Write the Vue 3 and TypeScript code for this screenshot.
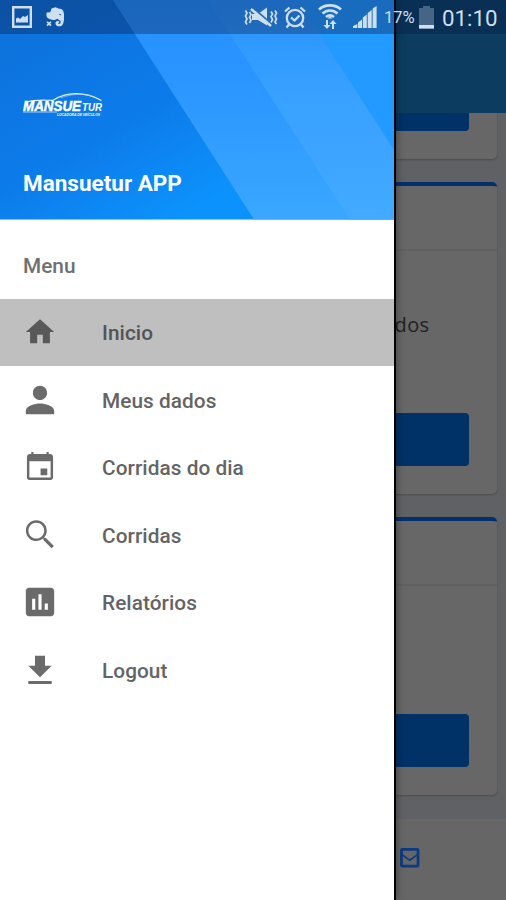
<script setup lang="ts">
interface MenuItem {
  label: string
  path: string
  box: string
  active?: boolean
}

const items: MenuItem[] = [
  { label: 'Inicio', box: '0 0 24 24', path: 'M10 20v-6h4v6h5v-8h3L12 3 2 12h3v8z', active: true },
  {
    label: 'Meus dados',
    box: '0 0 24 24',
    path: 'M12 12c2.76 0 5-2.24 5-5s-2.24-5-5-5-5 2.24-5 5 2.24 5 5 5zm0 2.5c-3.34 0-10 1.68-10 5V22h20v-2.5c0-3.32-6.66-5-10-5z',
  },
  {
    label: 'Corridas do dia',
    box: '0.3 0.3 23.4 23.4',
    path: 'M17 13h-4.6v4.6H17V13zM16.5 1.7V3h-9V1.7H6V3H5c-1.11 0-1.99.9-1.99 2L3 19c0 1.1.89 2 2 2h14c1.1 0 2-.9 2-2V5c0-1.1-.9-2-2-2h-1V1.7h-1.5zM19.3 19.3H4.7V8h14.6v11.3z',
  },
  {
    label: 'Corridas',
    box: '1.2 1.6 21.2 21.2',
    path: 'M15.5 14h-.79l-.28-.27C15.41 12.59 16 11.11 16 9.5 16 5.91 13.09 3 9.5 3S3 5.91 3 9.5 5.91 16 9.5 16c1.61 0 3.09-.59 4.23-1.57l.27.28v.79l5 4.99L20.49 19l-4.99-5zm-6 0.4C6.8 14.4 4.6 12.2 4.6 9.5S6.8 4.6 9.5 4.6 14.4 6.8 14.4 9.5 12.2 14.4 9.5 14.4z',
  },
  {
    label: 'Relatórios',
    box: '1.2 1.2 21.6 21.6',
    path: 'M19 3H5c-1.1 0-2 .9-2 2v14c0 1.1.9 2 2 2h14c1.1 0 2-.9 2-2V5c0-1.1-.9-2-2-2zM9 17H7v-7h2v7zm4 0h-2V7h2v10zm4 0h-2v-4h2v4z',
  },
  { label: 'Logout', box: '1.8 1.4 20.4 20.4', path: 'M19 9h-4V3H9v6H5l7 7 7-7zM5 18.2v1.8h14v-1.8H5z' },
]
</script>

<template>
  <div class="phone">
    <main class="page">
      <header class="toolbar"></header>
      <section class="card first">
        <div class="button"></div>
      </section>
      <section class="card second">
        <div class="card-title"></div>
        <p class="card-text">dados</p>
        <div class="button"></div>
      </section>
      <section class="card third">
        <div class="card-title"></div>
        <div class="button"></div>
      </section>
      <footer class="footer">
        <svg class="mail" viewBox="0 0 20 20">
          <rect x="1.5" y="1.5" width="17" height="17" rx=".8" />
          <path d="M2 6.8l8 5.700 8-5.700" stroke-width="1.700" />
        </svg>
      </footer>
    </main>

    <aside class="drawer">
      <div class="banner">
        <svg class="backdrop" viewBox="0 0 394 220" preserveAspectRatio="none">
          <defs>
            <linearGradient id="deep" x1="0" y1="0" x2="1" y2="1">
              <stop offset="0" stop-color="#0e70d8" />
              <stop offset=".45" stop-color="#0c7ceb" />
              <stop offset=".72" stop-color="#0c92fc" />
            </linearGradient>
            <linearGradient id="mid" x1="0" y1="0" x2="0" y2="1">
              <stop offset="0" stop-color="#2691ff" />
              <stop offset=".35" stop-color="#2a95ff" />
              <stop offset="1" stop-color="#3aa7ff" />
            </linearGradient>
            <linearGradient id="light" x1="0" y1="0" x2="0" y2="1">
              <stop offset="0" stop-color="#2893ff" />
              <stop offset=".45" stop-color="#39a1ff" />
              <stop offset="1" stop-color="#42aaff" />
            </linearGradient>
          </defs>
          <path fill="url(#deep)" d="M0 0h394v220H0z" />
          <path fill="url(#mid)" d="M113 0h281v220H254z" />
          <path fill="url(#light)" d="M208 0h188v220H350z" />
          <path fill="#239aff" d="M297 0h97v150z" />
        </svg>
        <div class="brand">
          <svg class="logo" viewBox="0 0 82 26">
            <path d="M2 10.500C14 7 22 8.500 30 8.300C43-.5 62-1 78.500 8.500" fill="none" stroke="#e4f1ff" stroke-width="1.200" />
            <path d="M38 6C50 .8 64 2 70 4.500" fill="none" stroke="#b5d8fb" stroke-width=".6" />
            <text class="word" x="0" y="19" textLength="58" lengthAdjust="spacingAndGlyphs">MANSUE</text>
            <text class="suffix" x="59" y="19" textLength="20" lengthAdjust="spacingAndGlyphs">TUR</text>
            <path d="M0 19.400h34v1H0z" fill="#a9cff8" />
            <text class="tagline" x="34" y="24" textLength="43" lengthAdjust="spacingAndGlyphs">LOCADORA DE VEÍCULOS</text>
          </svg>
          <h1 class="title">Mansuetur APP</h1>
        </div>
      </div>
      <h2 class="heading">Menu</h2>
      <nav>
        <a v-for="item in items" :key="item.label" class="item" :class="{ active: item.active }">
          <svg class="icon" :viewBox="item.box"><path :d="item.path" /></svg>
          <span class="label">{{ item.label }}</span>
        </a>
      </nav>
    </aside>

    <div class="status">
      <svg class="s-picture" viewBox="0 0 20 22">
        <path d="M1.200 1.200h17.600v19.600H1.200z" fill="none" stroke="currentColor" stroke-width="2.400" />
        <path d="M4 16.500v-4l2-1 2 1.500 3-3 2 1 3-2v7.500z" />
      </svg>
      <svg class="s-elephant" viewBox="0 0 18 21" preserveAspectRatio="none">
        <path d="M5.500 1.500l4-1.300 3 1.300c4 .3 5.300 2 5.500 6.500.2 5 0 9-2 11.300-2.500 1.800-6 1-6.500-1.800-.2-2.300 1.500-3.200 3.800-2.500l-.2 1.500c-1.300-.2-1.500 1 .2 1.200 1.200-.1 1.500-1.500 1.300-3.100l-3.500-2.300c-2 1.800-6 1.700-8.500-.2C.3 11 0 8 .8 5.700l3.500-.2z" />
        <path d="M1 15.500l4 4M5 15.500l-4 4" stroke="currentColor" stroke-width="1.700" />
        <path d="M12.800 7.500c1.300-.5 2.200 0 2.500 1.300z" fill="#24527f" />
      </svg>
      <span class="spacer"></span>
      <svg class="s-vibrate" viewBox="0 0 34 22">
        <path d="M8 7h6l9-6.500v18L14 13H8z" />
        <path d="M9 1l18 15.500" stroke="#236cb3" stroke-width="2" />
        <g fill="none" stroke="currentColor" stroke-width="1.700">
          <path d="M7 2l20 17" stroke-width="2.600" />
          <path d="M1.500 3.500L3 6 1.500 9 3 12l-1.500 3L3 17.500M5.500 5L7 7.500 5.500 10.500 7 13l-1.500 3" />
          <path d="M27 4.500L28.500 7 27 9.500l1.500 3L27 15.500M31 3.500L32.500 6 31 9l1.500 3L31 15l1.500 2" />
        </g>
      </svg>
      <svg class="s-alarm" viewBox="0 0 22 23">
        <g fill="none" stroke="currentColor" stroke-width="2.300">
          <circle cx="11" cy="12" r="8.200" />
          <path d="M7 11.500l3.500 3 5-5M1 5.500L5.500 1.500M21 5.500l-4.500-4M5 18.500L2.500 21.500M17 18.500l2.500 3" />
        </g>
      </svg>
      <svg class="s-wifi" viewBox="0 0 24 25">
        <g fill="none" stroke="currentColor" stroke-width="2.700">
          <path d="M1 5.500c6-5.500 16-5.500 22 0M4.500 9.500c4.500-4 10.500-4 15 0M8 13c2.500-2 5.500-2 8 0" />
        </g>
        <path d="M12 12l2.500 2.500h-5zM8 16h2v5h2.500L9 25l-3.500-4H8zM14 25h2v-5h2.500L15 16l-3.500 4H14z" />
      </svg>
      <svg class="s-signal" viewBox="0 0 24 22">
        <path d="M0 22v-2l4.300-2v4zM5 22v-5.500l4-3V22zM9.800 22V11.500l4-3V22zM14.700 22V7l4-3V22zM19.600 22V2.500l4-2.500v22z" />
      </svg>
      <span class="percent">17%</span>
      <svg class="s-battery" viewBox="0 0 15 23">
        <path d="M4 0h7v2h4v21H0V2h4z" fill="#456486" />
        <path d="M0 19h15v3.500H0z" />
      </svg>
      <span class="clock">01:10</span>
    </div>
  </div>
</template>

<style>
body {
  margin: 0;
}
</style>

<style scoped>
.phone {
  position: relative;
  display: grid;
  width: 506px;
  height: 900px;
  overflow: hidden;
  font-family: Roboto, 'Liberation Sans', sans-serif;
}

.page,
.drawer {
  grid-area: 1 / 1;
  box-sizing: border-box;
  height: 900px;
}

.page {
  display: flex;
  flex-direction: column;
  background: #606164;
}

.toolbar {
  flex: none;
  height: 113px;
  background: #0c3d60;
}

.card {
  box-sizing: border-box;
  flex: none;
  display: flex;
  flex-direction: column;
  margin: 0 9.5px 23px 10px;
  border-top: 4px solid #032f6d;
  border-radius: 5px;
  background: #676767;
  box-shadow: 0 1px 2px #4b4c4e;
}

.first {
  height: 46px;
  border-top: 0;
  border-radius: 0 0 5px 5px;
}

.second {
  height: 312px;
}

.third {
  height: 278px;
  margin-bottom: 24px;
}

.card-title {
  height: 63px;
  border-bottom: 2px solid #606060;
}

.card-text {
  margin: 59px 67px 0 0;
  text-align: right;
  font-size: 20px;
  line-height: 30px;
  letter-spacing: 0.4px;
  font-family: 'Open Sans', 'Noto Sans', sans-serif;
  color: #202020;
}

.button {
  height: 53px;
  margin: auto 28px 28px;
  border-radius: 4px;
  background: #003268;
}

.first .button {
  height: 18px;
  margin-top: 0;
  border-radius: 0 0 4px 4px;
}

.footer {
  flex: 1;
  padding: 29px 0 0 400px;
  background: #666;
}

.mail {
  display: block;
  width: 19.5px;
  height: 19.5px;
  fill: none;
  stroke: #0b3a83;
  stroke-width: 2.8;
}

.drawer {
  z-index: 1;
  width: 396px;
  border-right: 2px solid #000;
  background: #fff;
  box-shadow: 0 0 8px rgba(0, 0, 0, 0.45);
}

.banner {
  display: grid;
  height: 219.5px;
}

.backdrop,
.brand {
  grid-area: 1 / 1;
}

.backdrop {
  width: 394px;
  height: 219.5px;
}

.brand {
  z-index: 1;
  padding: 92px 0 0 23px;
}

.logo {
  display: block;
  width: 82px;
  height: 26px;
  overflow: visible;
  font-family: 'Liberation Sans', sans-serif;
  font-weight: 700;
  font-style: italic;
  fill: #fff;
}

.word {
  font-size: 15px;
  stroke: #fff;
  stroke-width: 0.5;
}

.suffix {
  font-size: 11px;
}

.tagline {
  font-size: 3.8px;
}

.title {
  margin: 51px 0 0;
  font-size: 22.5px;
  line-height: 28px;
  font-weight: 700;
  letter-spacing: 0;
  color: #fff;
}

.heading {
  box-sizing: border-box;
  height: 79px;
  margin: 0;
  padding: 12px 0 0 23px;
  font-size: 20.8px;
  line-height: 68px;
  font-weight: 500;
  letter-spacing: 0;
  color: #707070;
}

.item {
  display: flex;
  align-items: center;
  box-sizing: border-box;
  height: 67.5px;
  padding-left: 23px;
  gap: 45px;
  font-size: 20.8px;
  font-weight: 500;
  letter-spacing: 0.05px;
  color: #646464;
}

.item.active {
  background: #bfbfbf;
  color: #545454;
}

.label {
  padding-top: 2px;
}

.icon {
  width: 34px;
  height: 34px;
  fill: #6b6b6b;
}

.active .icon {
  fill: #585858;
}

.status {
  position: absolute;
  z-index: 2;
  inset: 0 0 auto;
  display: flex;
  box-sizing: border-box;
  height: 34px;
  padding: 6px 9px 0 12px;
  background: rgba(10, 23, 67, 0.35);
  color: #cddff0;
}

.status svg {
  flex: none;
  display: block;
  fill: currentColor;
}

.spacer {
  flex: 1;
}

.s-picture {
  width: 20px;
  height: 22px;
}

.s-elephant {
  width: 18px;
  height: 20px;
  margin: 1px 0 0 14px;
}

.s-vibrate {
  width: 34px;
  height: 22px;
  margin-top: 1px;
}

.s-alarm {
  width: 22px;
  height: 23px;
  margin-left: 6px;
}

.s-wifi {
  width: 24px;
  height: 25px;
  margin: -2px 0 0 12px;
}

.s-signal {
  width: 24px;
  height: 22px;
  margin-left: 11px;
}

.percent {
  width: 31px;
  margin-left: 7px;
  font-size: 16.5px;
  line-height: 24px;
}

.s-battery {
  width: 15px;
  height: 23px;
  margin-left: 4px;
}

.clock {
  width: 55px;
  margin-left: 8px;
  font-size: 22.3px;
  line-height: 25px;
  white-space: nowrap;
}
</style>
